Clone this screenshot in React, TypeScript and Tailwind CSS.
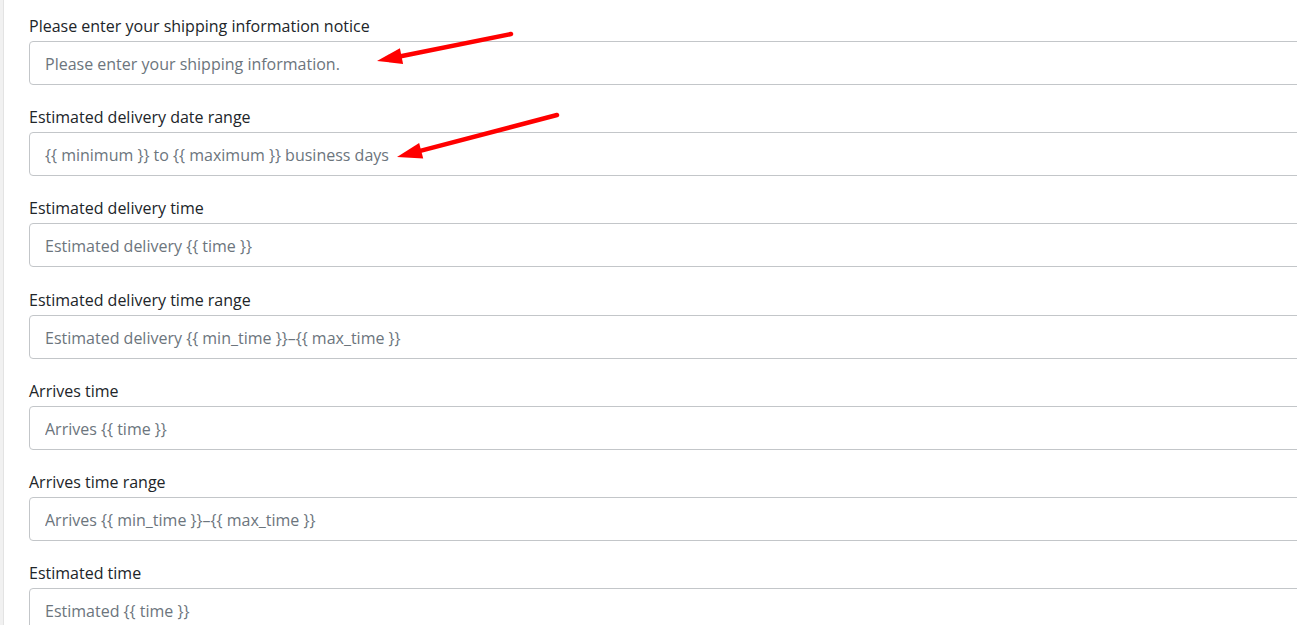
import React from 'react';

const fields = [
  { label: 'Please enter your shipping information notice', placeholder: 'Please enter your shipping information.' },
  { label: 'Estimated delivery date range', placeholder: '{{ minimum }} to {{ maximum }} business days' },
  { label: 'Estimated delivery time', placeholder: 'Estimated delivery {{ time }}' },
  { label: 'Estimated delivery time range', placeholder: 'Estimated delivery {{ min_time }}–{{ max_time }}' },
  { label: 'Arrives time', placeholder: 'Arrives {{ time }}' },
  { label: 'Arrives time range', placeholder: 'Arrives {{ min_time }}–{{ max_time }}' },
  { label: 'Estimated time', placeholder: 'Estimated {{ time }}' },
];

function Arrow({ tail, tip }: { tail: [number, number]; tip: [number, number] }) {
  const dx = tail[0] - tip[0];
  const dy = tail[1] - tip[1];
  const len = Math.hypot(dx, dy);
  const ux = dx / len;
  const uy = dy / len;
  const bx = tip[0] + ux * 25;
  const by = tip[1] + uy * 25;
  const nx = -uy * 8;
  const ny = ux * 8;
  return (
    <g>
      <line x1={tail[0]} y1={tail[1]} x2={bx - ux * 2} y2={by - uy * 2} stroke="#ff0000" strokeWidth={4.5} strokeLinecap="round" />
      <polygon points={`${tip[0]},${tip[1]} ${bx + nx},${by + ny} ${bx - nx},${by - ny}`} fill="#ff0000" />
    </g>
  );
}

export default function App() {
  return (
    <div className="relative flex h-[625px] w-[1297px] overflow-hidden bg-white" style={{ fontFamily: '"Open Sans", "Noto Sans", sans-serif' }}>
      <div className="w-[4px] shrink-0 border-r border-[#e3e3e3] bg-[#f1f1f1]" />
      <div className="w-[1330px] shrink-0 pl-[25px] pt-[14px]">
        {fields.map((f) => (
          <div key={f.label} className="mb-[20.2px]">
            <label className="mb-[3px] block text-[16px] leading-6 text-[#212529]">{f.label}</label>
            <input
              readOnly
              placeholder={f.placeholder}
              className="block h-[44px] w-full rounded-[4px] border border-[#c3c6c9] px-[15px] pt-[2px] text-[16px] text-[#212529] placeholder:text-[#6c757d] outline-none"
            />
          </div>
        ))}
      </div>
      <svg className="pointer-events-none absolute left-0 top-0" width={1297} height={625}>
        <Arrow tail={[511, 34]} tip={[377, 61]} />
        <Arrow tail={[557, 115]} tip={[397, 157]} />
      </svg>
    </div>
  );
}
